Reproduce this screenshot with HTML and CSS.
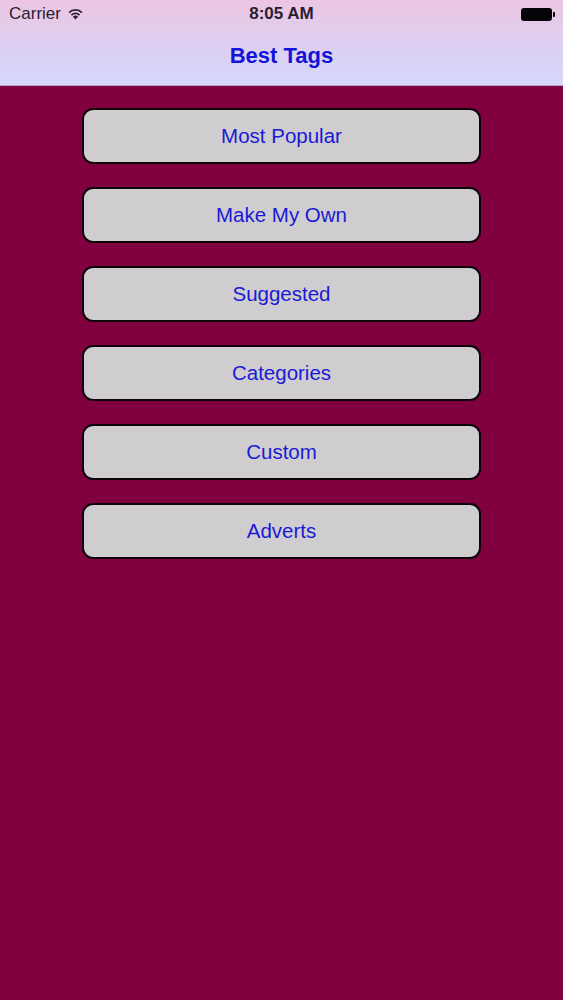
FILE: index.html
```html
<!DOCTYPE html>
<html>
<head>
<meta charset="utf-8">
<link rel="stylesheet" href="styles.css">
</head>
<body>
<div class="header">
  <div class="status">
    <div class="status-left">
      <span class="carrier">Carrier</span>
      <svg class="wifi" width="17" height="13" viewBox="0 0 17 13">
        <path d="M8.5 12.5 L5.9 9.7 A3.7 3.7 0 0 1 11.1 9.7 Z" fill="#2a2030"/>
        <path d="M3.8 7.5 A6.6 6.6 0 0 1 13.2 7.5 L12 8.8 A4.9 4.9 0 0 0 5 8.8 Z" fill="#2a2030"/>
        <path d="M1.5 5 A9.8 9.8 0 0 1 15.5 5 L14.3 6.3 A8.1 8.1 0 0 0 2.7 6.3 Z" fill="#2a2030"/>
      </svg>
    </div>
    <span class="time">8:05 AM</span>
    <div class="battery"><div class="battery-body"></div><div class="battery-nub"></div></div>
  </div>
  <div class="nav">Best Tags</div>
</div>
<div class="main">
  <div class="btn">Most Popular</div>
  <div class="btn">Make My Own</div>
  <div class="btn">Suggested</div>
  <div class="btn">Categories</div>
  <div class="btn">Custom</div>
  <div class="btn">Adverts</div>
</div>
</body>
</html>
```
FILE: styles.css
```css
html, body {
  margin: 0;
  padding: 0;
  height: 100%;
}
body {
  background: #800040;
  font-family: "Liberation Sans", Arial, sans-serif;
}
.header {
  height: 86px;
  background: linear-gradient(to bottom, #ecc6e2 0%, #dcd0f2 55%, #d6d8fc 100%);
  border-bottom: 1px solid #b8a8c8;
  box-sizing: border-box;
}
.status {
  height: 28px;
  display: flex;
  align-items: center;
  justify-content: space-between;
  padding: 0 8px 0 9px;
  position: relative;
}
.status-left {
  display: flex;
  align-items: center;
  gap: 6px;
}
.carrier {
  font-size: 17px;
  color: #2a2030;
}
.wifi {
  margin-top: -2px;
}
.time {
  position: absolute;
  left: 0;
  right: 0;
  text-align: center;
  font-size: 17px;
  font-weight: bold;
  color: #2a2030;
  pointer-events: none;
}
.battery {
  display: flex;
  align-items: center;
}
.battery-body {
  width: 31px;
  height: 13px;
  background: #050308;
  border-radius: 3px;
}
.battery-nub {
  width: 2px;
  height: 5px;
  background: #050308;
  border-radius: 0 1px 1px 0;
  margin-left: 1px;
}
.nav {
  height: 57px;
  display: flex;
  align-items: center;
  justify-content: center;
  font-size: 22px;
  font-weight: bold;
  color: #1414d8;
  padding-bottom: 2px;
  box-sizing: border-box;
}
.main {
  display: flex;
  flex-direction: column;
  align-items: center;
  gap: 23px;
  padding-top: 22px;
}
.btn {
  width: 399px;
  height: 56px;
  box-sizing: border-box;
  background: #cfcdcf;
  border: 2px solid #0c0408;
  border-radius: 11px;
  display: flex;
  align-items: center;
  justify-content: center;
  font-size: 20.5px;
  color: #1a1ad6;
}
```
